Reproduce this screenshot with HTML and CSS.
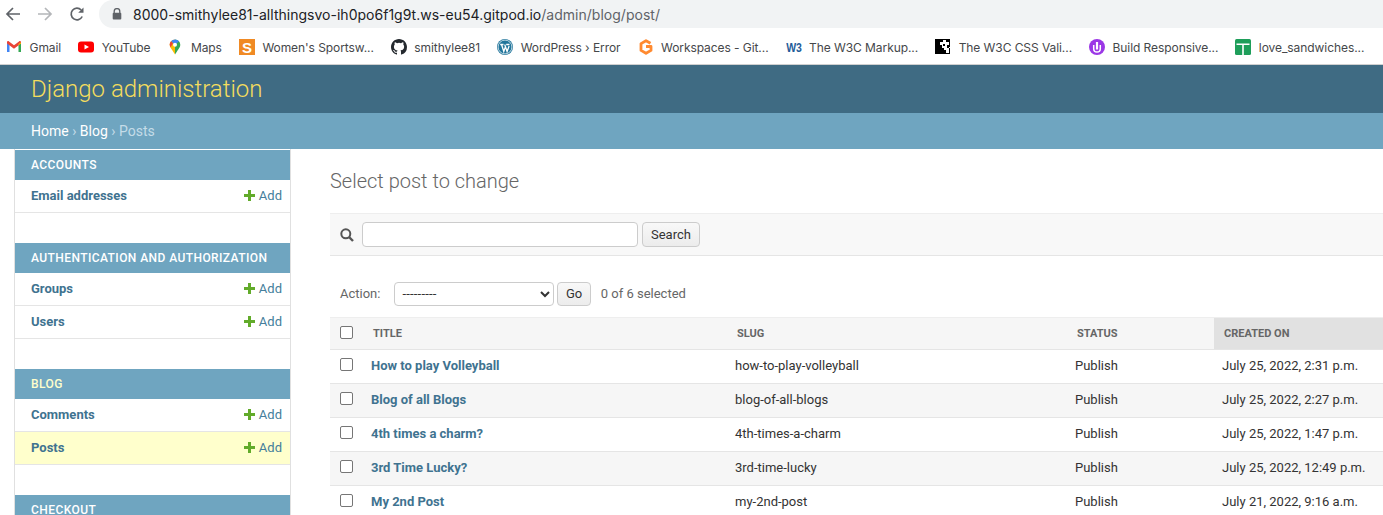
FILE: index.html
```html
<!DOCTYPE html>
<html lang="en">
<head>
  <meta charset="UTF-8">
  <title>Select post to change | Django site admin</title>
  <link rel="stylesheet" href="styles.css">
</head>
<body>
  <div class="browser-top">
    <div class="nav-row">
      <svg class="nav-icon" viewBox="0 0 16 16"><path d="M15 8H2.500M8 2L2 8l6 6" fill="none" stroke="#5f6368" stroke-width="1.700"/></svg>
      <svg class="nav-icon" viewBox="0 0 16 16"><path d="M1 8h12.500M8 2l6 6-6 6" fill="none" stroke="#b4b6b9" stroke-width="1.700"/></svg>
      <svg class="nav-icon" viewBox="0 0 16 16"><path d="M13.200 10.500A5.800 5.800 0 1 1 12.200 4" fill="none" stroke="#5f6368" stroke-width="1.700"/><path d="M14.500 1.500v5.300H9.200z" fill="#5f6368"/></svg>
      <div class="address">
        <svg class="lock" viewBox="0 0 10 12"><path d="M2.200 5V3.400a2.800 2.800 0 0 1 5.600 0V5" fill="none" stroke="#5f6368" stroke-width="1.300"/><rect x="0.700" y="4.800" width="8.600" height="6.700" rx="1" fill="#5f6368"/></svg>
        <span class="url">8000-smithylee81-allthingsvo-ih0po6f1g9t.ws-eu54.gitpod.io<span class="url-path">/admin/blog/post/</span></span>
      </div>
    </div>
    <div class="bookmarks">
      <a class="mark">
        <svg viewBox="0 0 16 16"><path d="M1 13V4l2.500 1v8z" fill="#4285f4"/><path d="M15 13V4l-2.500 1v8z" fill="#34a853"/><path d="M1 4.500V3.200C1 2.200 2.200 1.800 3 2.400l5 3.800 5-3.800c.8-.6 2-.2 2 .8v1.300L8 9.800z" fill="#ea4335"/><path d="M12.500 5L15 3.200v1.300l-2.500 1.800z" fill="#fbbc04"/></svg>
        <span>Gmail</span>
      </a>
      <a class="mark">
        <svg viewBox="0 0 16 16"><rect y="2.500" width="16" height="11" rx="3" fill="#f00"/><path d="M6.500 5.500v5L11 8z" fill="#fff"/></svg>
        <span>YouTube</span>
      </a>
      <a class="mark">
        <svg viewBox="0 0 16 16"><path d="M8 .5A5.300 5.300 0 0 0 2.700 5.800c0 1 .3 1.800.8 2.600L8 15.500z" fill="#fbbc04"/><path d="M8 .5a5.300 5.300 0 0 1 5.300 5.300c0 1-.3 1.800-.8 2.600L8 15.500z" fill="#34a853"/><path d="M4 2.200A5.300 5.300 0 0 1 8 .5a5.300 5.300 0 0 1 4 1.800L8 6z" fill="#4285f4"/><path d="M2.700 5.800c0-1.400.5-2.600 1.300-3.600L6 4.200 3.500 8.400z" fill="#ea4335"/><circle cx="8" cy="5.800" r="2" fill="#fff"/></svg>
        <span>Maps</span>
      </a>
      <a class="mark">
        <svg viewBox="0 0 16 16"><rect width="16" height="16" fill="#f08a24"/><text x="8" y="14" class="logo-s">S</text></svg>
        <span>Women's Sportsw...</span>
      </a>
      <a class="mark">
        <svg viewBox="0 0 16 16"><path fill="#24292e" d="M8 0C3.580 0 0 3.580 0 8c0 3.540 2.290 6.530 5.470 7.590.4.070.55-.17.55-.38 0-.19-.01-.82-.01-1.490-2.010.37-2.530-.49-2.690-.94-.09-.23-.48-.94-.82-1.130-.28-.15-.68-.52-.01-.53.630-.01 1.080.58 1.230.82.720 1.210 1.870.87 2.330.66.070-.52.280-.87.510-1.070-1.780-.2-3.640-.89-3.640-3.950 0-.87.310-1.590.820-2.150-.08-.2-.36-1.020.08-2.120 0 0 .67-.21 2.200.82a7.500 7.500 0 0 1 4 0c1.530-1.040 2.200-.82 2.200-.82.440 1.100.160 1.920.080 2.120.510.560.820 1.270.820 2.150 0 3.070-1.870 3.750-3.650 3.950.290.250.540.730.540 1.480 0 1.070-.01 1.930-.01 2.200 0 .21.150.46.550.38A8.010 8.010 0 0 0 16 8c0-4.420-3.580-8-8-8z"/></svg>
        <span>smithylee81</span>
      </a>
      <a class="mark">
        <svg viewBox="0 0 16 16"><circle cx="8" cy="8" r="8" fill="#21759b"/><circle cx="8" cy="8" r="6.900" fill="none" stroke="#fff" stroke-width="0.700"/><path d="M3.200 5.500h3.300M9.200 5.500h3.300M4.500 5.500l2.300 7 1.600-4.600M7.700 5.500l2.400 7 2-5.500" fill="none" stroke="#fff" stroke-width="1.300"/></svg>
        <span>WordPress › Error</span>
      </a>
      <a class="mark">
        <svg viewBox="0 0 16 16"><path d="M12.500 4.300L8 1.700 3 4.600v6.800L8 14.300l5-2.900V7.500H8" fill="none" stroke="#ff8a30" stroke-width="2.800" stroke-linejoin="round"/></svg>
        <span>Workspaces - Git...</span>
      </a>
      <a class="mark">
        <svg viewBox="0 0 16 16"><text x="0.200" y="10.200" class="logo-w3" transform="scale(1 1.300)">W3</text></svg>
        <span>The W3C Markup...</span>
      </a>
      <a class="mark">
        <svg viewBox="0 0 16 16"><rect width="16" height="16" fill="#fff"/><rect width="15" height="15" fill="#000"/><path d="M8 1h3v2h3v3h-2v3h3v-1h-1v6h-3v-3H9v-2H7V6H5V3h3z" fill="#fff"/><path d="M8 5h2v2H8z" fill="#000"/></svg>
        <span>The W3C CSS Vali...</span>
      </a>
      <a class="mark">
        <svg viewBox="0 0 16 16"><circle cx="8" cy="8" r="8" fill="#9b37e6"/><path d="M4.700 6v3.800a3.300 3.300 0 0 0 6.600 0V6" fill="none" stroke="#fff" stroke-width="1.500"/><path d="M8 3v7.500" stroke="#fff" stroke-width="2.200"/></svg>
        <span>Build Responsive...</span>
      </a>
      <a class="mark">
        <svg viewBox="0 0 16 16"><rect width="16" height="16" rx="1.500" fill="#1e9e5a"/><path d="M1.500 4.500h13v1.600H8.800V16H7.200V6.100H1.500z" fill="#fff"/></svg>
        <span>love_sandwiches...</span>
      </a>
    </div>
  </div>

  <div class="page">
    <div id="header"><div class="branding">Django administration</div></div>
    <div class="breadcrumbs"><a>Home</a> › <a>Blog</a> › Posts</div>

    <div class="content-wrap">
      <div class="sidebar">
        <div class="app-group">
          <div class="caption">Accounts</div>
          <div class="model"><a class="model-name">Email addresses</a><a class="add"><span class="plus"></span>Add</a></div>
        </div>
        <div class="app-group">
          <div class="caption">Authentication and Authorization</div>
          <div class="model"><a class="model-name">Groups</a><a class="add"><span class="plus"></span>Add</a></div>
          <div class="model"><a class="model-name">Users</a><a class="add"><span class="plus"></span>Add</a></div>
        </div>
        <div class="app-group">
          <div class="caption current">Blog</div>
          <div class="model"><a class="model-name">Comments</a><a class="add"><span class="plus"></span>Add</a></div>
          <div class="model selected"><a class="model-name">Posts</a><a class="add"><span class="plus"></span>Add</a></div>
        </div>
        <div class="app-group">
          <div class="caption">Checkout</div>
        </div>
      </div>

      <div class="main">
        <h1>Select post to change</h1>
        <div class="search-bar">
          <svg class="search-icon" viewBox="0 0 14 14"><circle cx="5.800" cy="5.800" r="4.500" fill="none" stroke="#555" stroke-width="2"/><path d="M9 9l4 4" stroke="#555" stroke-width="2.400"/></svg>
          <input class="search-input" type="text">
          <button class="btn">Search</button>
        </div>
        <div class="actions">
          <span class="action-label">Action:</span>
          <select class="action-select"><option>---------</option></select>
          <button class="btn go">Go</button>
          <span class="counter">0 of 6 selected</span>
        </div>
        <table class="results">
          <colgroup>
            <col class="col-check"><col class="col-title"><col class="col-slug"><col class="col-status"><col>
          </colgroup>
          <thead>
            <tr>
              <th><span class="check"></span></th>
              <th>Title</th>
              <th>Slug</th>
              <th>Status</th>
              <th class="sorted">Created on</th>
            </tr>
          </thead>
          <tbody>
            <tr>
              <td><span class="check"></span></td>
              <td><a class="post-link">How to play Volleyball</a></td>
              <td>how-to-play-volleyball</td>
              <td>Publish</td>
              <td>July 25, 2022, 2:31 p.m.</td>
            </tr>
            <tr>
              <td><span class="check"></span></td>
              <td><a class="post-link">Blog of all Blogs</a></td>
              <td>blog-of-all-blogs</td>
              <td>Publish</td>
              <td>July 25, 2022, 2:27 p.m.</td>
            </tr>
            <tr>
              <td><span class="check"></span></td>
              <td><a class="post-link">4th times a charm?</a></td>
              <td>4th-times-a-charm</td>
              <td>Publish</td>
              <td>July 25, 2022, 1:47 p.m.</td>
            </tr>
            <tr>
              <td><span class="check"></span></td>
              <td><a class="post-link">3rd Time Lucky?</a></td>
              <td>3rd-time-lucky</td>
              <td>Publish</td>
              <td>July 25, 2022, 12:49 p.m.</td>
            </tr>
            <tr>
              <td><span class="check"></span></td>
              <td><a class="post-link">My 2nd Post</a></td>
              <td>my-2nd-post</td>
              <td>Publish</td>
              <td>July 21, 2022, 9:16 a.m.</td>
            </tr>
          </tbody>
        </table>
      </div>
    </div>
  </div>
</body>
</html>
```
FILE: styles.css
```css
html, body {
  margin: 0;
  height: 515px;
  overflow: hidden;
  background-color: #fff;
}

body {
  font-family: Roboto, sans-serif;
  font-size: 13px;
  color: #333;
}

/* browser chrome */
.browser-top {
  height: 64px;
  border-bottom: 1px solid #d0d0d0;
  font-family: Inter, sans-serif;
}

.nav-row {
  display: flex;
  align-items: center;
  height: 28px;
  padding-left: 5px;
}

.nav-icon {
  width: 16px;
  height: 16px;
  margin-right: 16px;
}

.address {
  flex: 1;
  display: flex;
  align-items: center;
  height: 28px;
  margin-left: -2px;
  padding-left: 13px;
  border-radius: 14px 0 0 14px;
  background-color: #f1f3f4;
}

.lock {
  width: 10px;
  height: 12px;
  margin-right: 11px;
}

.url {
  font-size: 14px;
  letter-spacing: 0.015px;
  color: #202124;
}

.url-path {
  color: #5f6368;
}

.bookmarks {
  display: flex;
  align-items: center;
  gap: 17px;
  height: 34px;
  padding: 2px 0 0 6px;
}

.mark {
  display: flex;
  align-items: center;
  gap: 7.5px;
  font-size: 12px;
  letter-spacing: -0.07px;
  color: #45474a;
  white-space: nowrap;
}

.mark svg {
  width: 16px;
  height: 16px;
}

.logo-s {
  font: bold 15px "Liberation Sans", sans-serif;
  fill: #fff;
  text-anchor: middle;
}

.logo-w3 {
  font: bold 10.5px "Liberation Sans", sans-serif;
  letter-spacing: 0;
  fill: #1f5c99;
}

/* django header */
#header {
  height: 48px;
  padding: 0 31px;
  display: flex;
  align-items: center;
  background-color: #3f6b83;
}

.branding {
  font-size: 24px;
  font-weight: 300;
  color: #f5dd5d;
}

.breadcrumbs {
  height: 36px;
  line-height: 36px;
  padding-left: 31px;
  font-size: 14px;
  background-color: #6fa5c0;
  color: #c4dce8;
}

.breadcrumbs a {
  color: #fff;
}

.content-wrap {
  display: flex;
}

/* sidebar */
.sidebar {
  width: 275px;
  flex: none;
  margin-left: 14px;
  padding-top: 1px;
  border-left: 1px solid #e0e0e0;
  border-right: 1px solid #e0e0e0;
}

.app-group {
  margin-bottom: 30px;
}

.caption {
  height: 30px;
  line-height: 30px;
  padding-left: 16px;
  font-size: 12px;
  font-weight: 500;
  letter-spacing: 0.42px;
  text-transform: uppercase;
  color: #fff;
  background-color: #6fa5c0;
}

.caption.current {
  color: #ffc;
}

.model {
  display: flex;
  justify-content: space-between;
  align-items: center;
  height: 30px;
  padding: 0 8px 2px 16px;
  border-bottom: 1px solid #e5e5e5;
}

.model.selected {
  background-color: #ffc;
}

.model-name {
  font-weight: 700;
  color: #3f7390;
}

.add {
  display: flex;
  align-items: center;
  color: #447e9b;
}

.plus {
  width: 11px;
  height: 11px;
  margin-right: 4px;
  background:
    linear-gradient(#62ab2a, #62ab2a) center / 11px 3px no-repeat,
    linear-gradient(#62ab2a, #62ab2a) center / 3px 11px no-repeat;
}

/* main content */
.main {
  flex: 1;
  padding: 21px 0 0 39px;
  min-width: 0;
}

h1 {
  margin: 0;
  height: 43px;
  font-size: 20px;
  line-height: 23px;
  font-weight: 300;
  color: #666;
}

.search-bar {
  display: flex;
  align-items: center;
  height: 41px;
  padding-left: 10px;
  background-color: #f8f8f8;
  border-top: 1px solid #eee;
  border-bottom: 1px solid #e5e5e5;
}

.search-icon {
  width: 14px;
  height: 14px;
  margin-right: 8px;
}

.search-input {
  width: 276px;
  height: 25px;
  box-sizing: border-box;
  margin: 0 4px 0 0;
  padding: 2px 5px;
  background-color: #fff;
  border: 1px solid #ccc;
  border-radius: 4px;
}

.btn {
  height: 25px;
  padding: 0 8px;
  font-family: Roboto, sans-serif;
  font-size: 13px;
  color: #333;
  background: linear-gradient(#f8f8f8, #ececec);
  border: 1px solid #ccc;
  border-radius: 4px;
}

.actions {
  display: flex;
  align-items: center;
  height: 47px;
  padding: 14px 0 0 10px;
  color: #666;
}

.action-label {
  margin-right: 14px;
}

.action-select {
  width: 160px;
  height: 24px;
  padding-left: 3px;
  font-family: Roboto, sans-serif;
  font-size: 13px;
  letter-spacing: 0.2px;
  color: #333;
  background-color: #fff;
  border: 1px solid #ccc;
  border-radius: 4px;
}

.go {
  height: 24px;
  margin-left: 3px;
  padding: 0 7.5px;
}

.counter {
  margin-left: 10px;
}

.results {
  width: 100%;
  border-collapse: collapse;
  table-layout: fixed;
}

.col-check { width: 33px; }
.col-title { width: 364px; }
.col-slug { width: 340px; }
.col-status { width: 147px; }

.results th {
  height: 30px;
  padding: 0 10px 1px;
  text-align: left;
  font-size: 11px;
  font-weight: 700;
  text-transform: uppercase;
  color: #666;
  background-color: #f6f6f6;
  border-top: 1px solid #eee;
  border-bottom: 1px solid #e5e5e5;
}

.results th.sorted {
  background-color: #e1e1e1;
}

.results td {
  height: 31px;
  padding: 0 8px 2px;
  font-size: 13px;
  color: #333;
  border-bottom: 1px solid #e5e5e5;
}

.results th:first-child {
  padding: 0 0 1px 10px;
}

.results td:first-child {
  padding: 0 0 2px 10px;
}

.results tbody tr:nth-child(even) {
  background-color: #f6f6f6;
}

.post-link {
  font-weight: 700;
  color: #3f7390;
}

.check {
  display: block;
  width: 11px;
  height: 11px;
  margin-top: -2px;
  background-color: #fff;
  border: 1px solid #767676;
  border-radius: 2px;
}
```
